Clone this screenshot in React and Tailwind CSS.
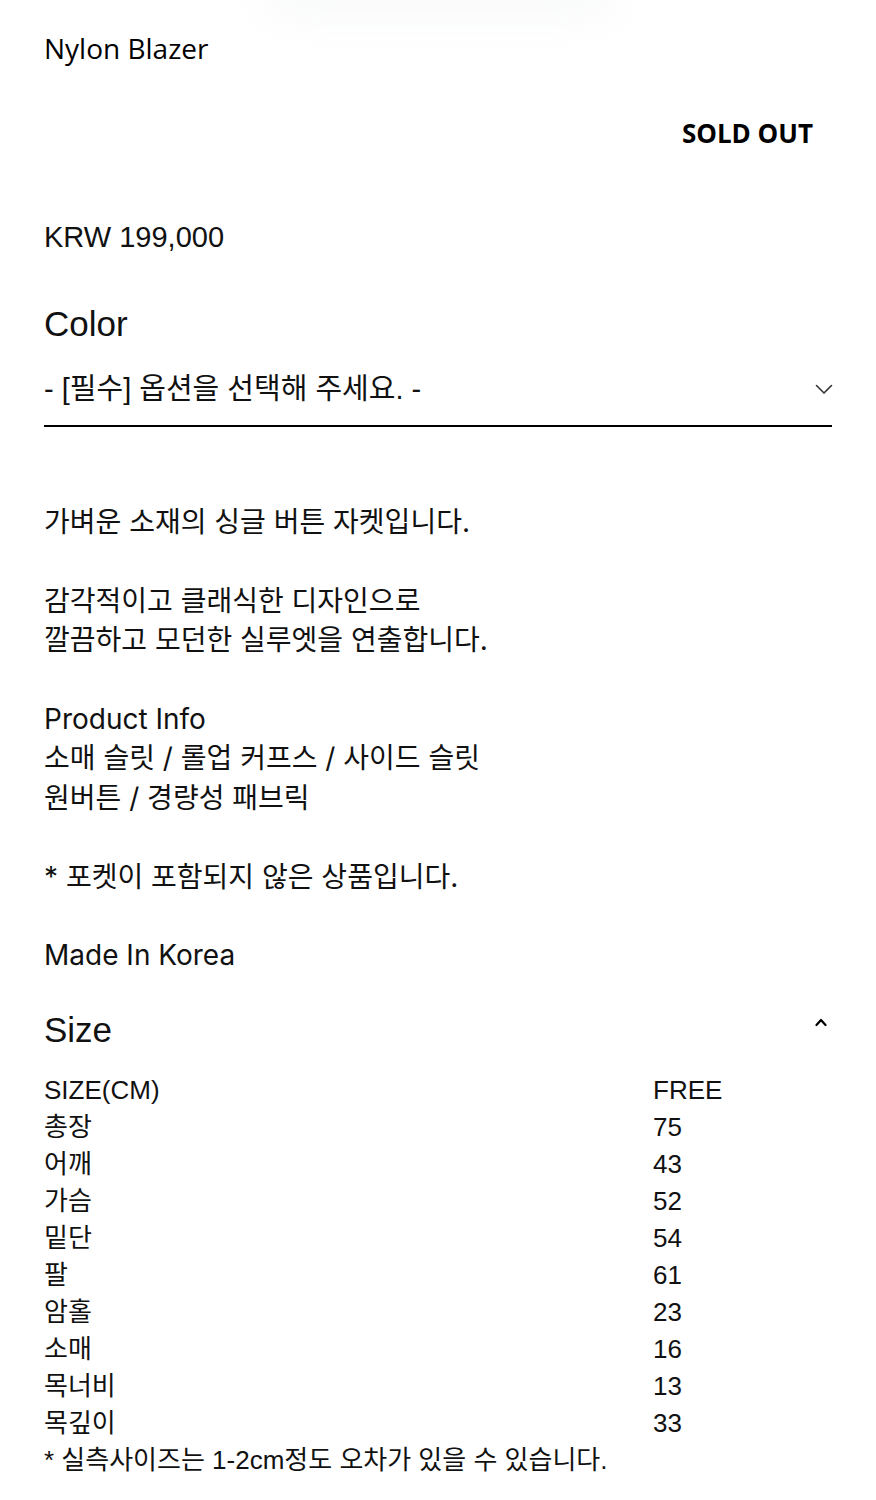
const body = '"Inter", "Noto Sans CJK KR", sans-serif';
const narrow = '"Liberation Sans", "Noto Sans CJK KR", sans-serif';
const open = '"Open Sans", "Noto Sans CJK KR", sans-serif';

const sizes = [
  ['SIZE(CM)', 'FREE'],
  ['총장', '75'],
  ['어깨', '43'],
  ['가슴', '52'],
  ['밑단', '54'],
  ['팔', '61'],
  ['암홀', '23'],
  ['소매', '16'],
  ['목너비', '13'],
  ['목깊이', '33'],
];

export default function App() {
  return (
    <div className="relative min-h-[1500px] w-full overflow-hidden bg-white text-[#111]">
      {/* faint shadow of the image above */}
      <div className="pointer-events-none absolute -top-7 left-[265px] h-10 w-[350px] rounded-full bg-gray-200/30 blur-xl" />

      <div className="px-[44px] pt-[30px]">
        <h1 className="text-[28px] leading-[36px] text-black" style={{ fontFamily: open }}>
          Nylon Blazer
        </h1>

        <div className="mt-[50px] flex justify-end pr-[19px]">
          <span className="text-[26px] font-bold leading-[34px] text-black" style={{ fontFamily: open }}>
            SOLD OUT
          </span>
        </div>

        <p className="mt-[69px] text-[29px] leading-[36px]" style={{ fontFamily: narrow }}>
          KRW 199,000
        </p>

        <h2 className="mt-[49px] text-[35px] leading-[40px]" style={{ fontFamily: narrow }}>
          Color
        </h2>

        <div className="mt-[27px] flex items-center justify-between border-b-2 border-black pb-[18px]">
          <span className="text-[29px] leading-[36px]" style={{ fontFamily: narrow }}>
            - [필수] 옵션을 선택해 주세요. -
          </span>
          <svg width="18" height="11" viewBox="0 0 18 11" fill="none" className="mr-[-1px]">
            <polyline points="1.5,1.5 9,9 16.5,1.5" stroke="#333" strokeWidth="1.6" strokeLinecap="round" strokeLinejoin="round" />
          </svg>
        </div>

        <div className="mt-[76px] text-[28px] leading-[39.4px]" style={{ fontFamily: body }}>
          <p>가벼운 소재의 싱글 버튼 자켓입니다.</p>
          <p className="mt-[39.4px]">감각적이고 클래식한 디자인으로</p>
          <p>깔끔하고 모던한 실루엣을 연출합니다.</p>
          <p className="mt-[39.4px]">Product Info</p>
          <p>소매 슬릿 / 롤업 커프스 / 사이드 슬릿</p>
          <p>원버튼 / 경량성 패브릭</p>
          <p className="mt-[39.4px]">* 포켓이 포함되지 않은 상품입니다.</p>
          <p className="mt-[39.4px]">Made In Korea</p>
        </div>

        <div className="mt-[34px] flex items-start justify-between">
          <h2 className="text-[35px] leading-[40px]" style={{ fontFamily: narrow }}>
            Size
          </h2>
          <svg width="12" height="9" viewBox="0 0 12 9" fill="none" className="mr-[5px] mt-[8px]">
            <polyline points="1.5,7 6,2 10.5,7" stroke="#000" strokeWidth="2.2" strokeLinecap="round" strokeLinejoin="round" />
          </svg>
        </div>

        <div className="mt-[22.5px] text-[26px] leading-[37px]" style={{ fontFamily: narrow }}>
          {sizes.map(([k, v]) => (
            <div key={k} className="grid grid-cols-[609px_1fr]">
              <span>{k}</span>
              <span>{v}</span>
            </div>
          ))}
          <p>* 실측사이즈는 1-2cm정도 오차가 있을 수 있습니다.</p>
        </div>
      </div>
    </div>
  );
}
